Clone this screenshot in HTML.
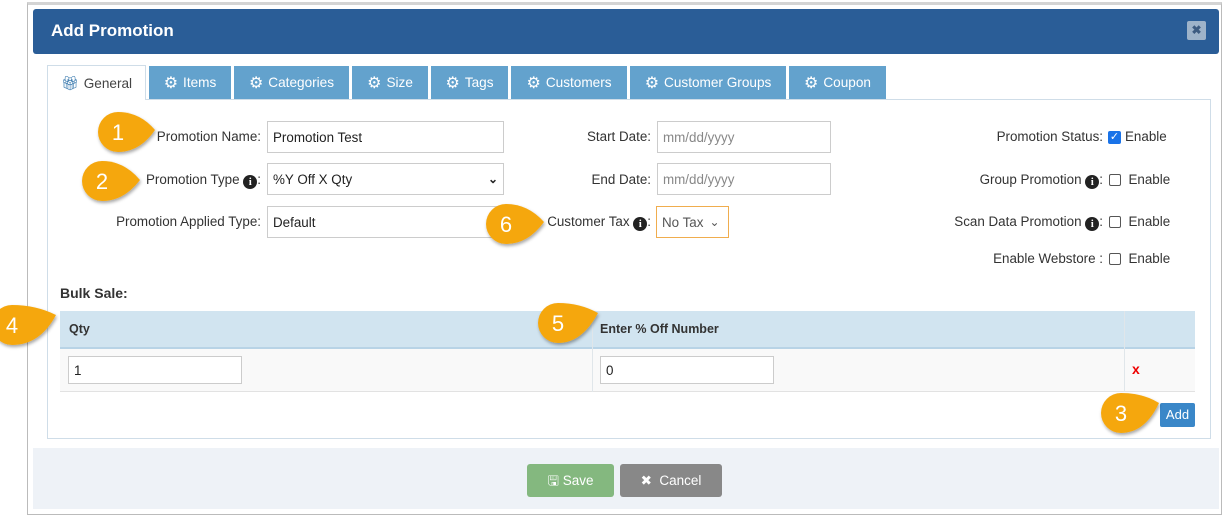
<!DOCTYPE html>
<html><head><meta charset="utf-8"><style>
*{box-sizing:border-box;margin:0;padding:0}
body{width:1229px;height:517px;background:#fff;font-family:"Liberation Sans",sans-serif;position:relative;overflow:hidden;color:#333}
.a{position:absolute}
.lbl{position:absolute;font-size:13.4px;color:#333;text-align:right;white-space:nowrap}
.inp{position:absolute;border:1px solid #ccc;background:#fff;font-size:13.4px;color:#222;padding:0 5px;display:flex;align-items:center}
.ph{color:#888}
.tab{position:absolute;top:66px;height:33px;background:#63a2cd;color:#fff;font-size:13.6px;display:flex;align-items:center;justify-content:center;gap:5px}
.gear{font-size:16px}
.cb{display:inline-block;width:12px;height:12px;border:1px solid #555;border-radius:2px;vertical-align:-2px;background:#fff}
.info{display:inline-block;width:14px;height:14px;border-radius:50%;background:#222;color:#fff;font:bold 11px "Liberation Serif",serif;text-align:center;line-height:14px;vertical-align:-1px}
</style></head><body>
<div class="a" style="left:27px;top:2px;width:1195px;height:513px;border:1px solid #bbb;border-top:3px solid #d4d4d4"></div>
<div class="a" style="left:33px;top:9px;width:1186px;height:45px;background:#2a5d97;border-radius:3px"></div>
<div class="a" style="left:51px;top:21px;color:#fff;font-size:17px;font-weight:bold">Add Promotion</div>
<div class="a" style="left:1187px;top:21px;width:19px;height:19px;background:#9eb3c9;border-radius:2px;color:#3d5b80;font-size:12px;font-weight:bold;text-align:center;line-height:19px">✖</div>

<div class="a" style="left:47px;top:99px;width:1164px;height:340px;border:1px solid #cfdde8"></div>
<div class="tab" style="left:47px;width:99px;background:#fff;color:#444;border:1px solid #cfdde8;border-bottom:none;top:65px;height:35px"><span style="color:#2a6fa8;font-size:14px">🎁︎</span>General</div>
<div class="tab" style="left:149px;width:82px"><span class="gear">⚙</span>Items</div>
<div class="tab" style="left:234px;width:115px"><span class="gear">⚙</span>Categories</div>
<div class="tab" style="left:352px;width:76px"><span class="gear">⚙</span>Size</div>
<div class="tab" style="left:431px;width:77px"><span class="gear">⚙</span>Tags</div>
<div class="tab" style="left:511px;width:116px"><span class="gear">⚙</span>Customers</div>
<div class="tab" style="left:630px;width:156px"><span class="gear">⚙</span>Customer Groups</div>
<div class="tab" style="left:789px;width:97px"><span class="gear">⚙</span>Coupon</div>

<div class="lbl" style="right:968px;top:129px">Promotion Name:</div>
<div class="inp" style="left:267px;top:121px;width:237px;height:32px">Promotion Test</div>
<div class="lbl" style="right:968px;top:172px">Promotion Type <span class="info">i</span>:</div>
<div class="inp" style="left:267px;top:163px;width:237px;height:32px;justify-content:space-between">%Y Off X Qty<span style="font-size:12px;font-weight:bold">⌄</span></div>
<div class="lbl" style="right:968px;top:214px">Promotion Applied Type:</div>
<div class="inp" style="left:267px;top:206px;width:237px;height:32px;border-right:none">Default</div>

<div class="lbl" style="right:578px;top:129px">Start Date:</div>
<div class="inp ph" style="left:657px;top:121px;width:174px;height:32px">mm/dd/yyyy</div>
<div class="lbl" style="right:578px;top:172px">End Date:</div>
<div class="inp ph" style="left:657px;top:163px;width:174px;height:32px">mm/dd/yyyy</div>
<div class="lbl" style="right:578px;top:214px">Customer Tax <span class="info">i</span>:</div>
<div class="inp" style="left:656px;top:206px;width:73px;height:32px;border-color:#f0ad4e;color:#555">No Tax <span style="font-size:12px;margin-left:6px">⌄</span></div>

<div class="lbl" style="right:126px;top:129px">Promotion Status:</div>
<div class="a" style="left:1108px;top:131px;width:13px;height:13px;background:#1a73e8;border-radius:2px;color:#fff;font-size:11px;line-height:13px;text-align:center">✓</div>
<div class="lbl" style="left:1125px;top:129px">Enable</div>
<div class="lbl" style="right:126px;top:172px">Group Promotion <span class="info">i</span>:</div>
<div class="lbl" style="right:126px;top:214px">Scan Data Promotion <span class="info">i</span>:</div>
<div class="lbl" style="right:126px;top:251px">Enable Webstore :</div>
<div class="lbl" style="left:1109px;top:172px"><span class="cb"></span>&nbsp; Enable</div>
<div class="lbl" style="left:1109px;top:214px"><span class="cb"></span>&nbsp; Enable</div>
<div class="lbl" style="left:1109px;top:251px"><span class="cb"></span>&nbsp; Enable</div>

<div class="a" style="left:60px;top:285px;font-size:14px;font-weight:bold;color:#333">Bulk Sale:</div>
<div class="a" style="left:60px;top:311px;width:1135px;height:38px;background:#d1e4f0;border-bottom:2px solid #b8d3e6"></div>
<div class="a" style="left:60px;top:349px;width:1135px;height:43px;background:#f9f9f9;border-bottom:1px solid #e2e2e2"></div>
<div class="a" style="left:592px;top:311px;width:1px;height:81px;background:#e0e6ea"></div>
<div class="a" style="left:1124px;top:311px;width:1px;height:81px;background:#e0e6ea"></div>
<div class="a" style="left:69px;top:322px;font-size:12.5px;font-weight:bold">Qty</div>
<div class="a" style="left:600px;top:322px;font-size:12.5px;font-weight:bold">Enter % Off Number</div>
<div class="inp" style="left:68px;top:356px;width:174px;height:28px">1</div>
<div class="inp" style="left:600px;top:356px;width:174px;height:28px">0</div>
<div class="a" style="left:1132px;top:361px;color:#e00;font-size:14px;font-weight:bold">x</div>
<div class="a" style="left:1160px;top:403px;width:35px;height:24px;background:#3a87c8;border-radius:2px;color:#fff;font-size:13px;text-align:center;line-height:24px">Add</div>

<div class="a" style="left:33px;top:448px;width:1186px;height:61px;background:#eef2f7"></div>
<div class="a" style="left:527px;top:464px;width:87px;height:33px;background:#84b87f;border-radius:3px;color:#fff;font-size:13.5px;text-align:center;line-height:33px">🖫 Save</div>
<div class="a" style="left:620px;top:464px;width:102px;height:33px;background:#888;border-radius:3px;color:#fff;font-size:13.5px;text-align:center;line-height:33px">✖ &nbsp;Cancel</div>

<svg class="a" width="1229" height="517" style="left:0;top:0">
<defs><filter id="s"><feDropShadow dx="1" dy="2" stdDeviation="1.5" flood-opacity=".35"/></filter></defs>
<g fill="#f5a70f" filter="url(#s)">
<path d="M118 112 Q140 112 155 130 Q140 152 118 152 A20 20 0 0 1 118 112Z"/>
<path d="M102 161 Q124 161 140 180 Q124 201 102 201 A20 20 0 0 1 102 161Z"/>
<path d="M506 204 Q528 204 544 222 Q528 244 506 244 A20 20 0 0 1 506 204Z"/>
<path d="M12 305 Q36 305 56 315 Q40 345 12 345 A20 20 0 0 1 12 305Z"/>
<path d="M558 303 Q580 303 598 313 Q582 343 558 343 A20 20 0 0 1 558 303Z"/>
<path d="M1121 393 Q1143 393 1159 403 Q1145 433 1121 433 A20 20 0 0 1 1121 393Z"/>
</g>
<g font-family="Liberation Sans" font-size="22" fill="#fff" text-anchor="middle">
<text x="118" y="140">1</text><text x="102" y="189">2</text><text x="506" y="232">6</text>
<text x="12" y="333">4</text><text x="558" y="331">5</text><text x="1121" y="421">3</text>
</g>
</svg>
</body></html>
